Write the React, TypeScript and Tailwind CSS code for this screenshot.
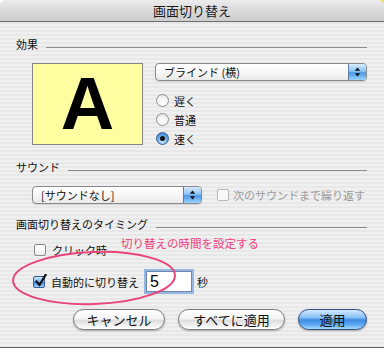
import React from "react";

const Stepper = () => (
    <div className="w-[18px] h-full flex items-center justify-center border-l border-[#5d7fa6] bg-[linear-gradient(#d6ebfd,#8cc3f4_45%,#4d97e6_55%,#9ad3ff)]">
        <svg width="7" height="10" viewBox="0 0 7 10">
            <polygon points="3.5,0.5 0.8,3.8 6.2,3.8" fill="#111" />
            <polygon points="0.8,6.2 6.2,6.2 3.5,9.5" fill="#111" />
        </svg>
    </div>
);

const Popup = ({ label, width }: { label: string; width: string }) => (
    <div className={`flex h-[18px] ${width} rounded-[4px] border border-[#8a8a8a] overflow-hidden bg-[linear-gradient(#ffffff,#f7f7f7_50%,#e9e9e9)] shadow-[0_1px_1px_rgba(0,0,0,0.12)]`}>
        <span className="flex-1 pl-[8px] text-[11px] leading-[16px] text-[#111]">{label}</span>
        <Stepper />
    </div>
);

const SectionHeader = ({ label }: { label: string }) => (
    <div className="flex items-start h-[14px]">
        <span className="text-[11px] leading-[14px] text-[#111] whitespace-nowrap">{label}</span>
        <div className="ml-[8px] mt-[10px] flex-1 h-px bg-[#8c8c8c]" />
    </div>
);

const Radio = ({ label, checked }: { label: string; checked?: boolean }) => (
    <div className="flex items-center h-[19px]">
        {checked ? (
            <span className="w-[13px] h-[13px] rounded-full border border-[#3b5f8c] bg-[radial-gradient(circle_at_50%_75%,#d2edff,#5fa6ea_55%,#2f77cf)] flex items-center justify-center">
                <span className="w-[5px] h-[5px] rounded-full bg-[#111]" />
            </span>
        ) : (
            <span className="w-[13px] h-[13px] rounded-full border border-[#8f8f8f] bg-[radial-gradient(circle_at_50%_80%,#ffffff,#f2f2f2_60%,#d6d6d6)]" />
        )}
        <span className="ml-[5px] text-[11px] leading-[14px] text-[#111]">{label}</span>
    </div>
);

const Checkbox = ({ checked, disabled }: { checked?: boolean; disabled?: boolean }) =>
    checked ? (
        <span className="relative w-[12px] h-[12px] rounded-[2px] border border-[#3b5f8c] bg-[linear-gradient(#cfe8fd,#6fb0ef_50%,#3f8de2_55%,#9ad3ff)]">
            <svg className="absolute left-[1px] top-[-3px]" width="12" height="13" viewBox="0 0 12 13">
                <path d="M1.5 7.5 L4.5 11 L10.5 1" stroke="#111" strokeWidth="2.2" fill="none" strokeLinecap="square" />
            </svg>
        </span>
    ) : (
        <span className={`w-[12px] h-[12px] rounded-[2px] border ${disabled ? "border-[#b8b8b8] bg-[#f8f8f8]" : "border-[#8a8a8a] bg-[linear-gradient(#ffffff,#eeeeee)]"}`} />
    );

const AquaButton = ({ label, width, primary }: { label: string; width: string; primary?: boolean }) => (
    <button
        type="button"
        className={`${width} h-[21px] rounded-full border text-[13px] leading-[19px] text-[#111] shadow-[0_1px_2px_rgba(0,0,0,0.3)] ${
            primary
                ? "border-[#2e4d86] bg-[linear-gradient(#d3e9fc,#86bff4_40%,#3d8ae2_52%,#5aa6f0_75%,#a5dcff)]"
                : "border-[#7a7a7a] bg-[linear-gradient(#ffffff,#f4f4f4_45%,#dedede_55%,#f3f3f3_85%,#ffffff)]"
        }`}
    >
        {label}
    </button>
);

export default function App() {
    return (
        <div className="w-[384px] h-[350px] bg-white font-['Noto_Sans_CJK_JP',sans-serif] relative overflow-hidden">
            <div className="absolute right-0 top-0 w-[8px] h-[8px] bg-[#e4e45a]" />
            <div className="relative h-[348px] flex flex-col rounded-t-[6px] overflow-hidden border-b border-[#5a5a5a] bg-[repeating-linear-gradient(180deg,#f0f0f0_0px,#f0f0f0_2px,#e8e8e8_2px,#e8e8e8_4px)]">
                {/* title bar */}
                <div className="h-[22px] shrink-0 flex items-center justify-center border-b border-[#6e6e6e] bg-[linear-gradient(#ececec,#dadada_50%,#cdcdcd)]">
                    <span className="text-[13px] leading-[16px] text-[#1a1a1a]">画面切り替え</span>
                </div>

                <div className="pl-[16px] pr-[17px]">
                    <div className="mt-[15px]">
                        <SectionHeader label="効果" />
                    </div>

                    <div className="mt-[12px] flex items-start">
                        <div className="ml-[16px] w-[112px] h-[82px] border border-[#858585] bg-[#ffffa2] flex items-center justify-center">
                            <span className="font-['Liberation_Sans',sans-serif] font-bold text-[74px] leading-none text-black">A</span>
                        </div>
                        <div className="ml-[12px] flex-1 flex flex-col">
                            <Popup label="ブラインド (横)" width="w-[212px]" />
                            <div className="mt-[10px] pl-[1px]">
                                <Radio label="遅く" />
                                <Radio label="普通" />
                                <Radio label="速く" checked />
                            </div>
                        </div>
                    </div>

                    <div className="mt-[12px]">
                        <SectionHeader label="サウンド" />
                    </div>

                    <div className="mt-[12px] flex items-center">
                        <div className="ml-[16px]">
                            <Popup label="[サウンドなし]" width="w-[170px]" />
                        </div>
                        <div className="ml-[15px] flex items-center">
                            <Checkbox disabled />
                            <span className="ml-[4px] text-[11px] leading-[14px] text-[#9a9a9a]">次のサウンドまで繰り返す</span>
                        </div>
                    </div>

                    <div className="mt-[13px]">
                        <SectionHeader label="画面切り替えのタイミング" />
                    </div>

                    <div className="mt-[12px] ml-[18px] flex items-center h-[14px]">
                        <Checkbox />
                        <span className="ml-[6px] text-[11px] leading-[14px] text-[#111]">クリック時</span>
                    </div>

                    <div className="mt-[14px] ml-[17px] flex items-center h-[21px]">
                        <Checkbox checked />
                        <span className="ml-[6px] w-[89px] text-[11px] leading-[14px] text-[#111] whitespace-nowrap">自動的に切り替え</span>
                        <div className="ml-[6px] w-[46px] h-[21px] border border-[#6f87a8] bg-white shadow-[0_0_0_2px_rgba(120,165,225,0.75)] flex items-center">
                            <span className="pl-[3px] font-['Liberation_Sans',sans-serif] text-[16px] leading-none text-black">5</span>
                        </div>
                        <span className="ml-[5px] text-[11px] leading-[14px] text-[#111]">秒</span>
                    </div>

                    <div className="mt-[17px] flex justify-end gap-[13px]">
                        <AquaButton label="キャンセル" width="w-[92px]" />
                        <AquaButton label="すべてに適用" width="w-[107px]" />
                        <AquaButton label="適用" width="w-[69px]" primary />
                    </div>
                </div>

                {/* annotation overlay */}
                <span className="absolute left-[121px] top-[236px] text-[11.5px] leading-[14px] text-[#ec3f7f] whitespace-nowrap">切り替えの時間を設定する</span>
                <svg className="absolute left-[11px] top-[249px]" width="168" height="58" viewBox="0 0 168 58">
                    <ellipse cx="83" cy="29" rx="81" ry="26" fill="none" stroke="#e8457a" strokeWidth="2" transform="rotate(-2 83 29)" />
                </svg>
            </div>
        </div>
    );
}
